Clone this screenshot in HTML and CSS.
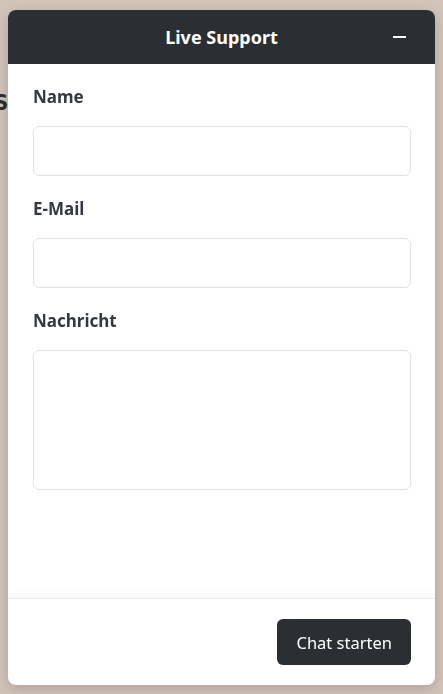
FILE: index.html
```html
<!DOCTYPE html>
<html lang="de">
<head>
  <meta charset="UTF-8">
  <meta name="viewport" content="width=device-width, initial-scale=1.0">
  <title>Live Support</title>
  <link rel="stylesheet" href="styles.css">
</head>
<body>
  <div class="page">
    <h2 class="page-title">S</h2>
  </div>

  <div class="chat-widget">
    <div class="chat-header">
      <span class="chat-title">Live Support</span>
      <button class="chat-minimize" aria-label="Minimieren">
        <svg width="14" height="14" viewBox="0 0 14 14"><line x1="1" y1="7" x2="14" y2="7" stroke="#fff" stroke-width="2"/></svg>
      </button>
    </div>
    <form class="chat-body">
      <div class="form-group">
        <label for="name">Name</label>
        <input type="text" id="name">
      </div>
      <div class="form-group">
        <label for="email">E-Mail</label>
        <input type="email" id="email">
      </div>
      <div class="form-group">
        <label for="message">Nachricht</label>
        <textarea id="message"></textarea>
      </div>
    </form>
    <div class="chat-footer">
      <button class="btn-start">Chat starten</button>
    </div>
  </div>
</body>
</html>
```

FILE: styles.css
```css
body {
  margin: 0;
  background-color: #d3c4ba;
  font-family: "Noto Sans", "Open Sans", sans-serif;
  color: #343a40;
}
.page {
  height: 694px;
  overflow: hidden;
}
.page-title {
  margin: 0 0 0 -6px;
  padding-top: 90px;
  font-family: "DejaVu Sans Condensed", sans-serif;
  font-size: 22px;
  font-weight: bold;
  color: #2b2f33;
}
.chat-widget {
  position: fixed;
  left: 8px;
  top: 10px;
  width: 427px;
  height: 675px;
  display: flex;
  flex-direction: column;
  background-color: #fff;
  border-radius: 8px;
  box-shadow: 0 4px 14px rgba(0, 0, 0, 0.18);
  overflow: hidden;
}
.chat-header {
  height: 54px;
  flex-shrink: 0;
  display: flex;
  align-items: center;
  justify-content: center;
  position: relative;
  background-color: #2b2f33;
  color: #fff;
}
.chat-title {
  font-size: 18px;
  font-weight: bold;
}
.chat-minimize {
  position: absolute;
  right: 29px;
  top: 20px;
  padding: 0;
  border: none;
  background: none;
  cursor: pointer;
  display: flex;
}
.chat-body {
  flex: 1;
  padding: 20px 24px 0 25px;
}
.form-group {
  margin-bottom: 20px;
}
.form-group label {
  display: block;
  font-size: 17px;
  font-weight: bold;
  line-height: 26px;
  margin-bottom: 16px;
}
.form-group input,
.form-group textarea {
  display: block;
  box-sizing: border-box;
  width: 100%;
  border: 1px solid #dee2e6;
  border-radius: 6px;
  font: inherit;
  padding: 8px 12px;
}
.form-group input {
  height: 50px;
}
.form-group textarea {
  height: 140px;
  resize: none;
}
.chat-footer {
  flex-shrink: 0;
  display: flex;
  justify-content: flex-end;
  padding: 20px 24px;
  border-top: 1px solid #e9ecef;
  box-shadow: 0 -4px 10px rgba(0, 0, 0, 0.03);
}
.btn-start {
  height: 46px;
  padding: 0 19px;
  border: none;
  border-radius: 6px;
  background-color: #2b2f33;
  color: #fff;
  font-family: inherit;
  font-size: 16.5px;
  cursor: pointer;
}
```
